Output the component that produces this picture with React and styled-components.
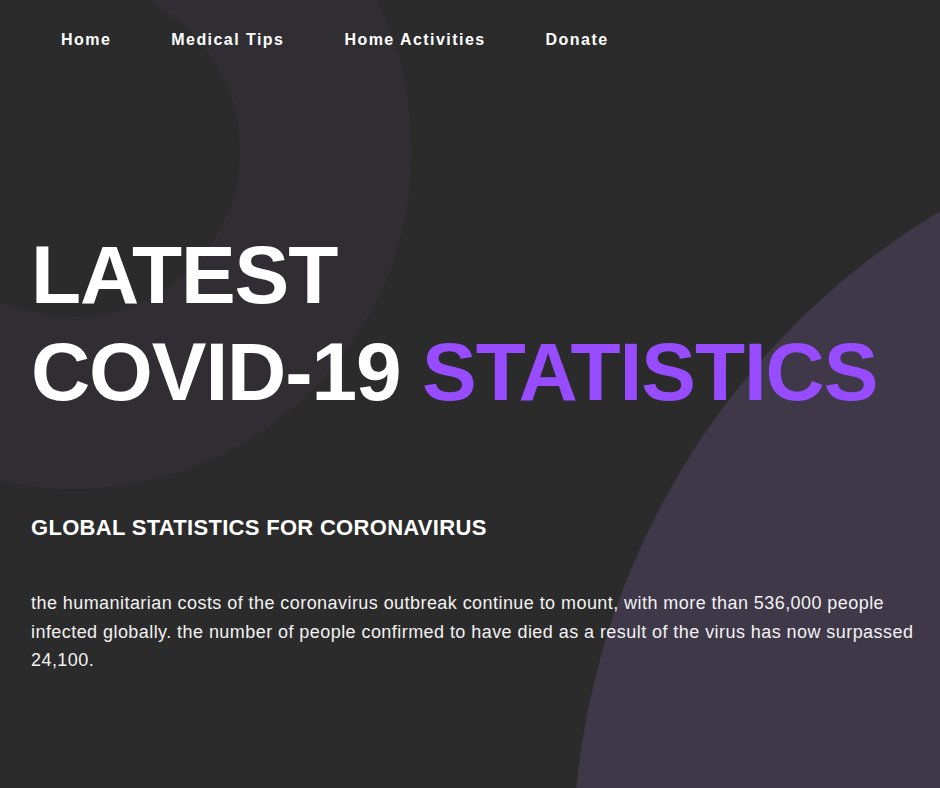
import React from 'react';
import styled, { createGlobalStyle } from 'styled-components';

const GlobalStyle = createGlobalStyle`
  * { box-sizing: border-box; }
  html, body {
    margin: 0;
    padding: 0;
    background: #2b2b2b;
    font-family: "Liberation Sans", Arial, Helvetica, sans-serif;
  }
`;

const Page = styled.div`
  position: relative;
  width: 100%;
  height: 788px;
  overflow: hidden;
  background: #2b2b2b;
  color: #fff;
`;

/* decorative rings in the background */
const Ring = styled.div`
  position: absolute;
  left: ${p => p.cx - p.r}px;
  top: ${p => p.cy - p.r}px;
  width: ${p => p.r * 2}px;
  height: ${p => p.r * 2}px;
  border-radius: 50%;
  border: ${p => p.thickness}px solid ${p => p.color};
  background: ${p => p.fill || 'transparent'};
`;

const Content = styled.div`
  position: relative;
  z-index: 1;
  padding: 0 10px 0 31px;
`;

const Nav = styled.nav`
  display: flex;
  padding-top: 31px;
`;

const NavLink = styled.a`
  padding: 0 30px;
  font-size: 16px;
  line-height: 18px;
  font-weight: 700;
  letter-spacing: 1.45px;
  color: #fff;
  text-decoration: none;
  cursor: pointer;
`;

const Title = styled.h1`
  margin: 177px 0 0;
  font-size: 82px;
  line-height: 97px;
  font-weight: 700;
  letter-spacing: -1.1px;
  text-transform: uppercase;
  color: #fff;
`;

const Accent = styled.span`
  color: #974dff;
`;

const SubTitle = styled.h2`
  margin: 95px 0 0;
  font-size: 22px;
  line-height: 26px;
  font-weight: 700;
  letter-spacing: 0.3px;
  color: #fff;
`;

const Lead = styled.p`
  margin: 48px 0 0;
  font-size: 18px;
  line-height: 28.5px;
  letter-spacing: 0.44px;
  color: #f2f2f2;
`;

const links = ['Home', 'Medical Tips', 'Home Activities', 'Donate'];

export default function App() {
  return (
    <Page>
      <GlobalStyle />
      <Ring cx={73} cy={150} r={339} thickness={172} color="#302e33" />
      <Ring cx={1330} cy={860} r={757} thickness={0} color="#3e3849" fill="#3e3849" />
      <Content>
        <Nav>
          {links.map(l => <NavLink key={l}>{l}</NavLink>)}
        </Nav>
        <Title>
          Latest<br />
          Covid-19 <Accent>Statistics</Accent>
        </Title>
        <SubTitle>GLOBAL STATISTICS FOR CORONAVIRUS</SubTitle>
        <Lead>
          the humanitarian costs of the coronavirus outbreak continue to mount, with more than 536,000 people
          infected globally. the number of people confirmed to have died as a result of the virus has now surpassed
          24,100.
        </Lead>
      </Content>
    </Page>
  );
}
